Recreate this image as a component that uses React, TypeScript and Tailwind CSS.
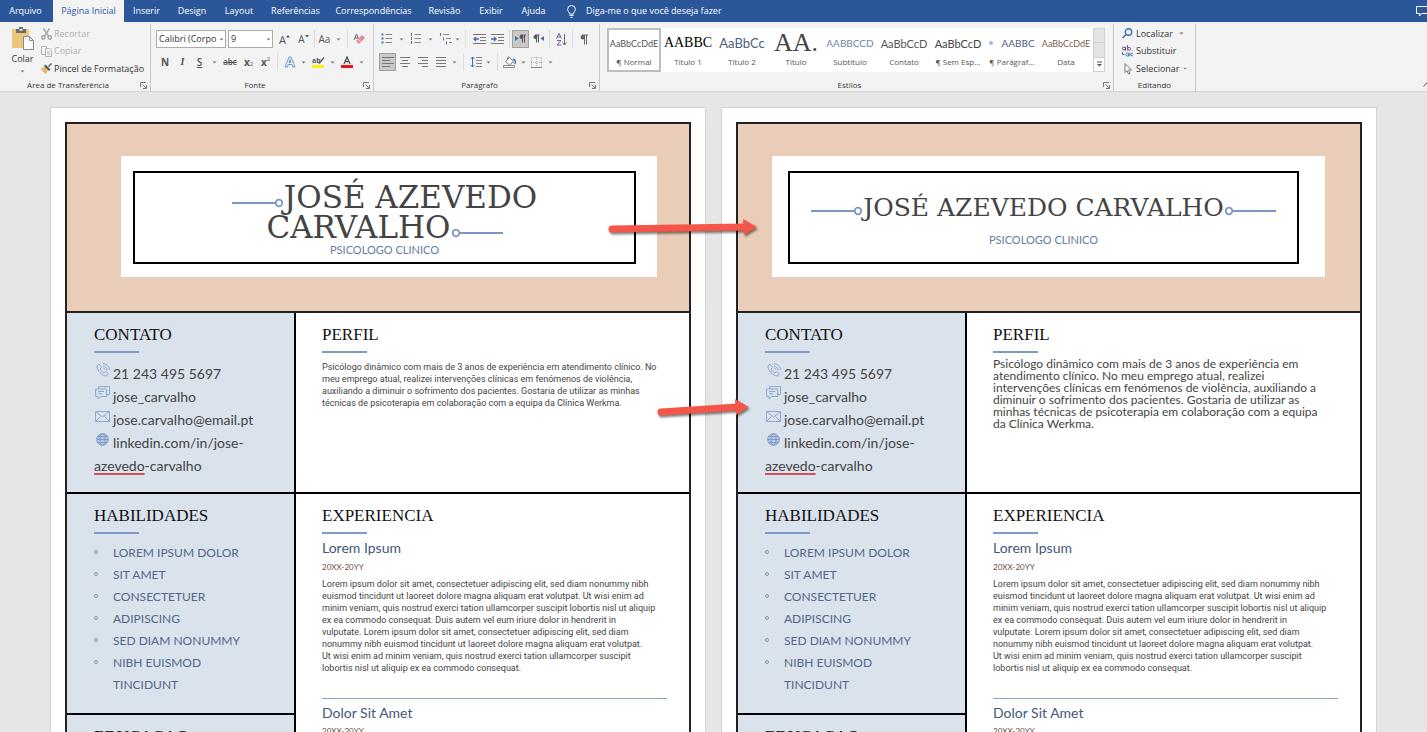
import type { ReactNode } from "react";

const tabs = [
  { label: "Inserir", width: "w-[45px]" },
  { label: "Design", width: "w-[46px]" },
  { label: "Layout", width: "w-[48px]" },
  { label: "Referências", width: "w-[65px]" },
  { label: "Correspondências", width: "w-[91px]" },
  { label: "Revisão", width: "w-[51px]" },
  { label: "Exibir", width: "w-[42px]" },
  { label: "Ajuda", width: "w-[43px]" },
];

const styles = [
  { name: "¶ Normal", sample: "AaBbCcDdE", look: "text-[9px] text-[#555]" },
  { name: "Título 1", sample: "AABBC", look: "font-['Liberation_Serif',serif] text-[14px] text-black" },
  { name: "Título 2", sample: "AaBbCc", look: "text-[13px] text-[#4b6080]" },
  { name: "Título", sample: "AA.", look: "font-['Liberation_Serif',serif] text-[26px] text-[#444]" },
  { name: "Subtítulo", sample: "AABBCCD", look: "text-[10px] text-[#6e86ab]" },
  { name: "Contato", sample: "AaBbCcD", look: "text-[11px] text-[#555]" },
  { name: "¶ Sem Esp...", sample: "AaBbCcD", look: "text-[11px] text-[#444]" },
  { name: "¶ Parágraf...", sample: "AABBC", look: "text-[10px] text-[#4b6080]", bullet: true },
  { name: "Data", sample: "AaBbCcDdE", look: "text-[9px] text-[#7c5f50]" },
];

const skills = [
  "LOREM IPSUM DOLOR",
  "SIT AMET",
  "CONSECTETUER",
  "ADIPISCING",
  "SED DIAM NONUMMY",
  "NIBH EUISMOD TINCIDUNT",
];

const experience = [
  "Lorem ipsum dolor sit amet, consectetuer adipiscing elit, sed diam nonummy nibh",
  "euismod tincidunt ut laoreet dolore magna aliquam erat volutpat. Ut wisi enim ad",
  "minim veniam, quis nostrud exerci tation ullamcorper suscipit lobortis nisl ut aliquip",
  "ex ea commodo consequat. Duis autem vel eum iriure dolor in hendrerit in",
  "vulputate. Lorem ipsum dolor sit amet, consectetuer adipiscing elit, sed diam",
  "nonummy nibh euismod tincidunt ut laoreet dolore magna aliquam erat volutpat.",
  "Ut wisi enim ad minim veniam, quis nostrud exerci tation ullamcorper suscipit",
  "lobortis nisl ut aliquip ex ea commodo consequat.",
];

const profileSmall = [
  "Psicólogo dinâmico com mais de 3 anos de experiência em atendimento clínico. No",
  "meu emprego atual, realizei intervenções clínicas em fenómenos de violência,",
  "auxiliando a diminuir o sofrimento dos pacientes. Gostaria de utilizar as minhas",
  "técnicas de psicoterapia em colaboração com a equipa da Clínica Werkma.",
];

const profileLarge = [
  "Psicólogo dinâmico com mais de 3 anos de experiência em",
  "atendimento clínico. No meu emprego atual, realizei",
  "intervenções clínicas em fenómenos de violência, auxiliando a",
  "diminuir o sofrimento dos pacientes. Gostaria de utilizar as",
  "minhas técnicas de psicoterapia em colaboração com a equipa",
  "da Clínica Werkma.",
];

function Caret({ width = "w-3" }: { width?: string }) {
  return (
    <button aria-label="Mais opções" className={`${width} flex h-full shrink-0 items-center justify-center`}>
      <svg width="5" height="3" viewBox="0 0 5 3">
        <path d="M0.5 0.5h4L2.5 2.6z" fill="#777" />
      </svg>
    </button>
  );
}

function Tool({
  label,
  width = "w-[18px]",
  active = false,
  children,
}: {
  label: string;
  width?: string;
  active?: boolean;
  children: ReactNode;
}) {
  return (
    <button
      aria-label={label}
      className={`${width} flex h-full shrink-0 items-center justify-center text-[10px] leading-none text-[#555] ${
        active ? "border border-[#a0a0a0] bg-[#c8c8c8]" : ""
      }`}
    >
      {children}
    </button>
  );
}

function Divider({ width = "w-[7px]" }: { width?: string }) {
  return (
    <span className={`${width} flex h-full shrink-0 justify-center`}>
      <span className="h-full w-px bg-[#dedede]" />
    </span>
  );
}

function Group({
  title,
  width,
  launcher = true,
  children,
}: {
  title: string;
  width: string;
  launcher?: boolean;
  children: ReactNode;
}) {
  return (
    <section className={`${width} flex shrink-0 flex-col pt-0.5`}>
      <div className="flex h-full flex-col border-r border-[#c9c9c9]">
        <div className="h-[55px] shrink-0 px-[5px]">{children}</div>
        <div className="flex h-3 shrink-0 items-center">
          <h2 className="flex-1 text-center text-[8px] leading-3">{title}</h2>
          {launcher && (
            <button aria-label={`Opções de ${title}`} className="mr-[3px] ml-1 w-[7px]">
              <svg width="7" height="7" viewBox="0 0 7 7" fill="none" stroke="#777">
                <path d="M0.5 5V0.5H6M2.5 2.5l3.5 3.5M6.5 3v3.5H3" />
              </svg>
            </button>
          )}
        </div>
      </div>
    </section>
  );
}

// Four horizontal strokes, each given as [start, end]
function Lines({ rows }: { rows: number[][] }) {
  return (
    <svg width="12" height="11" viewBox="0 0 12 11" stroke="#777">
      {rows.map(([from, to], i) => (
        <path key={i} d={`M${from} ${i * 3 + 0.5}H${to}`} />
      ))}
    </svg>
  );
}

function Clipboard() {
  return (
    <Group title="Área de Transferência" width="w-[151px]">
      <div className="flex pt-px">
        <button className="mr-px flex w-[35px] flex-col items-center">
          <svg width="24" height="24" viewBox="0 0 24 24" className="mt-px shrink-0">
            <rect x="1" y="3" width="17" height="19" fill="#ecc57c" />
            <path d="M5 3h3V1h4v2h3v4H5z" fill="#6c6c6c" />
            <rect x="8.500" y="3" width="3" height="1.500" fill="#fff" />
            <path d="M12.500 10.500h6l4 4v9h-10z" fill="#fff" stroke="#888" />
            <path d="M18.500 10.500v4h4" fill="none" stroke="#888" />
          </svg>
          <span className="mt-0.5 leading-[14px]">Colar</span>
          <svg width="5" height="3" viewBox="0 0 5 3" className="mt-1">
            <path d="M0.500 0.500h4L2.500 2.600z" fill="#777" />
          </svg>
        </button>
        <div className="flex flex-col">
          <button disabled className="flex h-[17px] items-center gap-0.5 text-[#b0b0b0]">
            <svg width="11" height="12" viewBox="0 0 11 12" fill="none" stroke="#a8a8a8" strokeWidth="1.400">
              <path d="M2.500 0.500l5 7.500M8.500 0.500l-5 7.500" />
              <circle cx="2.300" cy="9.500" r="1.700" />
              <circle cx="8.700" cy="9.500" r="1.700" />
            </svg>
            Recortar
          </button>
          <button disabled className="flex h-[18px] items-center gap-0.5 text-[#b0b0b0]">
            <svg width="11" height="11" viewBox="0 0 11 11" fill="#f3f3f3" stroke="#b5b5b5">
              <path d="M0.500 0.500h5v8h-5z" />
              <path d="M4.500 2.500h4l2 2v6h-6zM6 6h3M6 8h3" />
            </svg>
            Copiar
          </button>
          <button className="flex h-[17px] items-center gap-0.5 whitespace-nowrap">
            <svg width="11" height="11" viewBox="0 0 11 11">
              <path d="M0 5l4-1 3 3-2 4c-2-1-4-3-5-6z" fill="#e9b568" />
              <path d="M3 3l1.500-1.500 5 5L8 8zM7 3l3-3 1 1-3 3z" fill="#555" />
            </svg>
            Pincel de Formatação
          </button>
        </div>
      </div>
    </Group>
  );
}

function FontGroup() {
  return (
    <Group title="Fonte" width="w-[223px]">
      <div className="flex flex-col gap-[5px] pt-1.5">
        <div className="flex h-[18px]">
          <div className="relative mr-0.5 h-full w-[70px]">
            <select
              aria-label="Fonte"
              className="h-full w-full appearance-none border border-[#ababab] bg-white pl-0.5 text-[9px]"
            >
              <option>Calibri (Corpo</option>
            </select>
            <span className="pointer-events-none absolute inset-y-0 right-0">
              <Caret width="w-2.5" />
            </span>
          </div>
          <div className="relative h-full w-[45px]">
            <select
              aria-label="Tamanho da fonte"
              className="h-full w-full appearance-none border border-[#ababab] bg-white pl-0.5 text-[9px]"
            >
              <option>9</option>
            </select>
            <span className="pointer-events-none absolute inset-y-0 right-0">
              <Caret width="w-2.5" />
            </span>
          </div>
          <Tool label="Aumentar fonte" width="w-[23px]">
            <span className="text-[11px]">A</span>
            <svg width="4" height="8" viewBox="0 0 4 8" fill="#555">
              <path d="M0 2.500L2 0l2 2.500z" />
            </svg>
          </Tool>
          <Tool label="Diminuir fonte" width="w-[15px]">
            A
            <svg width="4" height="8" viewBox="0 0 4 8" fill="#555">
              <path d="M0 0l2 2.500L4 0z" />
            </svg>
          </Tool>
          <Divider width="w-[6px]" />
          <Tool label="Maiúsculas e minúsculas" width="w-[15px]">
            Aa
          </Tool>
          <Caret />
          <Divider width="w-[6px]" />
          <Tool label="Limpar formatação">
            <svg width="12" height="12" viewBox="0 0 12 12">
              <path d="M1 7l2.500-6L6 7M2 5h3" fill="none" stroke="#666" />
              <path d="M3 8l6-6 3 3-6 6z" fill="#e58a9c" />
              <path d="M5 6l3 3" stroke="#fff" strokeWidth="0.700" />
            </svg>
          </Tool>
        </div>
        <div className="flex h-[18px]">
          <Tool label="Negrito"><b>N</b></Tool>
          <Tool label="Itálico" width="w-[17px]">
            <i className="font-['Liberation_Serif',serif] font-bold">I</i>
          </Tool>
          <Tool label="Sublinhado" width="w-[17px]"><u className="font-semibold">S</u></Tool>
          <Caret />
          <Tool label="Tachado" width="w-5"><s className="text-[8px] font-semibold">abc</s></Tool>
          <Tool label="Subscrito" width="w-[17px]"><b>x</b><sub className="text-[6px]">2</sub></Tool>
          <Tool label="Sobrescrito" width="w-[17px]"><b>x</b><sup className="text-[6px]">2</sup></Tool>
          <Divider />
          <Tool label="Efeitos de texto" width="w-[17px]">
            <svg width="12" height="12" viewBox="0 0 12 12" fill="none" stroke="#6d9ad2">
              <path d="M1 11L5 1h2l4 10H8.500L8 8.500H4L3.500 11zM5 6.500h2L6 3.500z" />
            </svg>
          </Tool>
          <Caret width="w-2.5" />
          <Tool label="Cor do realce" width="w-5">
            <svg width="13" height="13" viewBox="0 0 13 13">
              <text x="0" y="7" fontSize="7" fontWeight="700" fill="#555">ab</text>
              <path d="M7 7.500l5-6" stroke="#666" strokeWidth="1.500" />
              <rect y="9" width="12" height="3" fill="#fff200" />
            </svg>
          </Tool>
          <Caret width="w-[9px]" />
          <Tool label="Cor da fonte" width="w-5">
            <svg width="12" height="13" viewBox="0 0 12 13">
              <path d="M3 8l3-7 3 7M4 5.500h4" fill="none" stroke="#555" strokeWidth="1.300" />
              <rect y="9" width="12" height="3" fill="#e8141c" />
            </svg>
          </Tool>
          <Caret width="w-2" />
        </div>
      </div>
    </Group>
  );
}

function ListIcon({ numbered = false }: { numbered?: boolean }) {
  return (
    <svg width="12" height="12" viewBox="0 0 12 12">
      {[1.5, 5.5, 9.5].map((y) => (
        <g key={y}>
          {numbered ? (
            <path d={`M1.500 ${y - 1.5}v3`} stroke="#4675b5" />
          ) : (
            <rect x="0.500" y={y - 1} width="2" height="2" fill="#4675b5" />
          )}
          <path d={`M4.500 ${y}H11`} stroke="#888" />
        </g>
      ))}
    </svg>
  );
}

function IndentIcon({ flip = false }: { flip?: boolean }) {
  return (
    <svg width="13" height="11" viewBox="0 0 13 11" fill="none">
      <path d="M0 .5h13M7 3.500h6M7 6.500h6M0 9.500h13" stroke="#777" />
      <path d={flip ? "M0 5h5M3 3l2 2-2 2" : "M1 5h5M3 3L1 5l2 2"} stroke="#3c6eb4" strokeWidth="1.300" />
    </svg>
  );
}

function ParagraphGroup() {
  return (
    <Group title="Parágrafo" width="w-[226px]">
      <div className="flex flex-col gap-[5px] pt-1.5">
        <div className="flex h-[18px]">
          <Tool label="Marcadores" width="w-4"><ListIcon /></Tool>
          <Caret width="w-[13px]" />
          <Tool label="Numeração" width="w-4"><ListIcon numbered /></Tool>
          <Caret width="w-[13px]" />
          <Tool label="Lista de vários níveis" width="w-4">
            <svg width="13" height="12" viewBox="0 0 13 12">
              <path d="M1.500 0v3M4.500 4.500v3M7.500 8.500v3" stroke="#4675b5" />
              <path d="M4 1.500h6M7 5.500h5M10 9.500h3" stroke="#888" />
            </svg>
          </Tool>
          <Caret width="w-2" />
          <Divider width="w-[9px]" />
          <Tool label="Diminuir recuo"><IndentIcon /></Tool>
          <Tool label="Aumentar recuo"><IndentIcon flip /></Tool>
          <Divider width="w-[6px]" />
          <Tool label="Da esquerda para a direita" width="w-[17px]" active>
            <svg width="11" height="10" viewBox="0 0 11 10">
              <path d="M0 2l3.500 2.500L0 7z" fill="#3c6eb4" />
              <path d="M7.500 1v7.500M9.500 1v7.500M5.500 1H11" stroke="#555" fill="none" />
              <circle cx="6.500" cy="3" r="2" fill="#555" />
            </svg>
          </Tool>
          <Tool label="Da direita para a esquerda">
            <svg width="11" height="10" viewBox="0 0 11 10">
              <path d="M11 2L7.500 4.500 11 7z" fill="#3c6eb4" />
              <path d="M3.500 1v7.500M5.500 1v7.500M2 1h4.500" stroke="#555" fill="none" />
              <circle cx="2.500" cy="3" r="2" fill="#555" />
            </svg>
          </Tool>
          <Divider width="w-[5px]" />
          <Tool label="Classificar">
            <svg width="11" height="13" viewBox="0 0 11 13" fill="none">
              <path d="M0.500 5.500L3 .5l2.500 5M1.500 4h3" stroke="#3c6eb4" />
              <path d="M1 7.500h4l-4 4.500h4.500" stroke="#8854a8" />
              <path d="M8.500 1v11M6.500 9.500l2 2.500 2-2.500" stroke="#666" />
            </svg>
          </Tool>
          <Divider width="w-[5px]" />
          <Tool label="Mostrar tudo">
            <svg width="8" height="11" viewBox="0 0 8 11">
              <path d="M4.500 1v9.500M6.500 1v9.500M2 1h6" stroke="#666" fill="none" />
              <circle cx="2.800" cy="3.200" r="2.200" fill="#666" />
            </svg>
          </Tool>
        </div>
        <div className="flex h-[18px]">
          <Tool label="Alinhar à esquerda" width="w-[17px]" active>
            <Lines rows={[[0, 12], [0, 8], [0, 12], [0, 8]]} />
          </Tool>
          <Tool label="Centralizar">
            <Lines rows={[[1, 11], [3, 9], [1, 11], [3, 9]]} />
          </Tool>
          <Tool label="Alinhar à direita">
            <Lines rows={[[1, 11], [5, 11], [1, 11], [5, 11]]} />
          </Tool>
          <Tool label="Justificar">
            <Lines rows={[[1, 11], [1, 11], [1, 11], [1, 11]]} />
          </Tool>
          <Caret width="w-[9px]" />
          <Divider width="w-[9px]" />
          <Tool label="Espaçamento entre linhas" width="w-4">
            <svg width="12" height="12" viewBox="0 0 12 12" fill="none">
              <path d="M2.500 1v10M.5 3l2-2 2 2M.5 9l2 2 2-2" stroke="#3c6eb4" />
              <path d="M6 1.500h6M6 4.500h6M6 7.500h6M6 10.500h6" stroke="#888" />
            </svg>
          </Tool>
          <Caret width="w-[9px]" />
          <Divider width="w-2" />
          <Tool label="Sombreamento">
            <svg width="14" height="12" viewBox="0 0 14 12" fill="none">
              <path d="M2.500 5.500l4-4 4 4-4 3.500z" fill="#fff" stroke="#777" />
              <path d="M4.500 4V1.500q1-1.500 2 0" stroke="#777" />
              <path d="M10 3q3 1 2 5" stroke="#3c6eb4" strokeWidth="1.500" />
              <path d="M.5 9.500h11v2H.5z" fill="#fff" stroke="#888" />
            </svg>
          </Tool>
          <Caret width="w-2" />
          <Tool label="Bordas">
            <svg width="11" height="11" viewBox="0 0 11 11" fill="none" stroke="#aaa">
              <path d="M.5.5h10v10H.5zM5.500 0v11M0 5.500h11" strokeDasharray="1 1" />
              <path d="M0 10.500h11" stroke="#888" />
            </svg>
          </Tool>
          <Caret width="w-2.5" />
        </div>
      </div>
    </Group>
  );
}

function StylesGroup() {
  return (
    <Group title="Estilos" width="w-[514px]">
      <div className="pt-1">
        <div className="ml-0.5 flex h-11 w-[498px] bg-white">
          {styles.map((style, i) => (
            <button
              key={style.name}
              className={`flex w-[54px] shrink-0 flex-col items-center border-2 whitespace-nowrap text-[#555] ${
                i === 0 ? "border-[#bdbdbd]" : "border-transparent"
              }`}
            >
              <span className={`flex h-[26px] items-center leading-none font-['Lato',sans-serif] ${style.look}`}>
                {style.bullet && <span className="mr-2 size-1 shrink-0 rounded-full bg-[#a9bbd6]" />}
                {style.sample}
              </span>
              <span className="text-[8px] leading-3">{style.name}</span>
            </button>
          ))}
          <div className="flex w-3 flex-col border border-[#cfcfcf]">
            <button aria-label="Linha anterior" className="flex-1 bg-[#e3e3e3]" />
            <button aria-label="Próxima linha" className="flex-1 border-y border-[#cfcfcf] bg-[#e3e3e3]" />
            <button aria-label="Mais estilos" className="flex flex-1 items-center justify-center">
              <svg width="5" height="6" viewBox="0 0 5 6">
                <path d="M0 1h5" stroke="#555" />
                <path d="M0 3h5L2.500 5.500z" fill="#555" />
              </svg>
            </button>
          </div>
        </div>
      </div>
    </Group>
  );
}

function EditGroup() {
  return (
    <Group title="Editando" width="w-[82px]" launcher={false}>
      <div className="flex flex-col pt-px pl-[3px]">
        <button className="flex h-[17px] items-center gap-[3px]">
          <svg width="11" height="11" viewBox="0 0 11 11" fill="none" stroke="#3c6eb4" strokeWidth="1.400">
            <circle cx="6.500" cy="4" r="3.200" />
            <path d="M4 6.500L.5 10" />
          </svg>
          Localizar
          <Caret />
        </button>
        <button className="flex h-[18px] items-center gap-[3px]">
          <svg width="11" height="12" viewBox="0 0 11 12" fill="none">
            <circle cx="2" cy="3.500" r="1.500" stroke="#555" />
            <path d="M3.500 2v3.500" stroke="#555" />
            <path d="M5.500 0v5.500" stroke="#8854a8" />
            <circle cx="7.200" cy="3.800" r="1.500" stroke="#8854a8" />
            <circle cx="5.500" cy="9.500" r="1.500" stroke="#3c6eb4" />
            <path d="M7 8v3.500M10.800 8.300q-2.500-.5-2.500 1.200t2.500 1.300M.5 7v2.500h2" stroke="#3c6eb4" />
          </svg>
          Substituir
        </button>
        <button className="flex h-[17px] items-center gap-[3px]">
          <svg width="11" height="12" viewBox="0 0 11 12">
            <path d="M3 .5v9l2-2 1.500 3.500 1.500-.7L6.500 7H9.500z" fill="#fff" stroke="#777" />
          </svg>
          Selecionar
          <Caret width="w-1" />
        </button>
      </div>
    </Group>
  );
}

function Ribbon() {
  return (
    <header className="shrink-0 text-[9px] text-[#333]">
      <nav className="flex h-[22px] items-center bg-[#2b579a] text-white">
        <button className="w-[53px] pr-0.5 text-center">Arquivo</button>
        <button className="h-full w-[71px] bg-[#f3f3f3] text-center text-[#2b579a]">Página Inicial</button>
        {tabs.map((tab) => (
          <button key={tab.label} className={`${tab.width} whitespace-nowrap text-center`}>
            {tab.label}
          </button>
        ))}
        <button className="ml-3 flex items-center gap-2.5 whitespace-nowrap">
          <svg width="9" height="13" viewBox="0 0 9 13" fill="none" stroke="#fff">
            <path d="M2.500 9C2.500 7 .6 6.500 .6 4.200a3.900 3.700 0 0 1 7.800 0C8.400 6.500 6.500 7 6.500 9zM2.500 10.500h4M3.500 12.400h2" />
          </svg>
          Diga-me o que você deseja fazer
        </button>
        <button aria-label="Comentários" className="ml-auto h-3 w-[11px] overflow-hidden">
          <svg width="15" height="12" viewBox="0 0 15 12" fill="none" stroke="#fff">
            <path d="M.5 1.500h14v7H5.500L3.500 11V8.500h-3z" />
          </svg>
        </button>
      </nav>
      <div className="flex h-[70px] border-b border-[#d5d5d5] bg-[#f3f3f3]">
        <Clipboard />
        <FontGroup />
        <ParagraphGroup />
        <StylesGroup />
        <EditGroup />
        <button aria-label="Recolher a faixa de opções" className="mt-auto mb-1 ml-auto w-1 overflow-hidden">
          <svg width="8" height="5" viewBox="0 0 8 5" fill="none" stroke="#555">
            <path d="M.5 4.500l3.500-4 3.500 4" />
          </svg>
        </button>
      </div>
    </header>
  );
}

function Heading({ children }: { children: ReactNode }) {
  return (
    <>
      <h2 className="font-['Liberation_Serif',serif] text-[17px] leading-6 text-[#111]">{children}</h2>
      <div className="mt-1 h-0.5 w-[45px] bg-[#7f9ac6]" />
    </>
  );
}

function Stem({ flip = false }: { flip?: boolean }) {
  return (
    <svg width="52" height="10" viewBox="0 0 52 10" fill="none" stroke="#7d97c2" className="inline-block align-baseline">
      <path d={flip ? "M8 5h44" : "M0 5h44"} strokeWidth="2" />
      <circle cx={flip ? 5 : 47} cy="5" r="3.300" strokeWidth="1.800" />
    </svg>
  );
}

function TextLines({ lines }: { lines: string[] }) {
  return (
    <>
      {lines.map((line) => (
        <span key={line} className="block whitespace-nowrap">
          {line}
        </span>
      ))}
    </>
  );
}

const contactIcons = {
  phone: (
    <svg width="14" height="14" viewBox="0 0 14 14" fill="none" stroke="#8fa8cd">
      <path d="M3 1L1 3c-.5 4 5 10 9.500 10l2-2.500-3-2-1.500 1.500C6.500 9.500 4.500 7.500 4 6l1.500-1.500zM7 3c2 0 4 2 4 4M7 .7c3.500 0 6.300 2.800 6.300 6.300M7.500 5.200c.8 0 1.300.6 1.300 1.300" />
    </svg>
  ),
  chat: (
    <svg width="15" height="14" viewBox="0 0 15 14" fill="none" stroke="#8fa8cd">
      <path d="M3.500 3V.6h11v8h-2.500M.6 3h11v7.500H5.500L3 13v-2.500H.6zM3 5.500h6M3 7.800h4" />
    </svg>
  ),
  mail: (
    <svg width="15" height="11" viewBox="0 0 15 11" fill="none" stroke="#8fa8cd">
      <path d="M.5.5h14v10H.5zM.5.5l7 5.500 7-5.500M.5 10.500l5-5M14.500 10.500l-5-5" />
    </svg>
  ),
  web: (
    <svg width="13" height="13" viewBox="0 0 13 13" fill="#b7c8e2" stroke="#7f9bc6">
      <circle cx="6.500" cy="6.500" r="5.800" />
      <ellipse cx="6.500" cy="6.500" rx="2.600" ry="5.800" fill="none" />
      <path d="M.7 6.500h11.600M1.500 3.500h10M1.500 9.500h10" />
    </svg>
  ),
};

function ContactLine({ icon, children }: { icon: keyof typeof contactIcons; children: ReactNode }) {
  return (
    <li className="flex h-[23px] whitespace-nowrap">
      <span className="flex h-4 w-[19px] shrink-0 items-center justify-center pr-0.5">{contactIcons[icon]}</span>
      {children}
    </li>
  );
}

function Resume({ fixed = false }: { fixed?: boolean }) {
  return (
    <article className="flex-1 border border-[#d3d3d3] bg-white px-[14px] pt-[14px] pb-4">
      <div className="border-2 border-[#222]">
        <header className={`bg-[#e9cdb8] pt-8 pb-[34px] ${fixed ? "pr-[35px] pl-[34px]" : "pr-8 pl-[54px]"}`}>
          <div className={`bg-white pt-[15px] pb-[13px] ${fixed ? "pr-[26px] pl-4" : "pr-[21px] pl-3"}`}>
            <div
              className={`flex h-[93px] flex-col items-center justify-center border-2 border-black text-center ${
                fixed ? "" : "pt-1"
              }`}
            >
              <h1
                className={`whitespace-nowrap font-['DejaVu_Serif',serif] text-[#444] ${
                  fixed ? "text-[25px] leading-[44px]" : "text-[31px] leading-[30px]"
                }`}
              >
                <Stem />
                {fixed ? (
                  "JOSÉ AZEVEDO CARVALHO"
                ) : (
                  <>
                    JOSÉ AZEVEDO
                    <br />
                    CARVALHO
                  </>
                )}
                <Stem flip />
              </h1>
              <p className={`text-[11px] text-[#667da4] ${fixed ? "leading-5" : "leading-4"}`}>PSICOLOGO CLINICO</p>
            </div>
          </div>
        </header>

        <div className="grid grid-cols-[229px_1fr] border-t-2 border-[#222]">
          <section className="h-[179px] border-r-2 border-black bg-[#dae2ec] pt-2.5 pl-[27px]">
            <Heading>CONTATO</Heading>
            <ul className="mt-[9px] text-[14px] leading-[23px] text-[#444]">
              <ContactLine icon="phone">21 243 495 5697</ContactLine>
              <ContactLine icon="chat">jose_carvalho</ContactLine>
              <ContactLine icon="mail">jose.carvalho@email.pt</ContactLine>
              <ContactLine icon="web">linkedin.com/in/jose-</ContactLine>
              <li>
                <span className="underline decoration-[#d8505c] decoration-2 underline-offset-2">azevedo</span>
                -carvalho
              </li>
            </ul>
          </section>
          <section className="pt-2.5 pl-[26px]">
            <Heading>PERFIL</Heading>
            <p
              className={
                fixed
                  ? "mt-[5px] text-[12px] leading-3 text-[#444]"
                  : "mt-2 font-['Roboto',sans-serif] text-[9px] leading-3 text-[#444]"
              }
            >
              <TextLines lines={fixed ? profileLarge : profileSmall} />
            </p>
          </section>
        </div>

        <div className="grid grid-cols-[229px_1fr] border-t-2 border-black">
          <div className="flex flex-col border-r-2 border-black bg-[#dae2ec]">
            <section className="h-[219px] pt-2.5 pl-[27px]">
              <Heading>HABILIDADES</Heading>
              <ul className="mt-2 text-[12px] leading-[22px] text-[#54678a]">
                {skills.map((skill) => (
                  <li key={skill} className="flex">
                    <span className="mt-2 mr-[15px] size-1 shrink-0 rounded-full border border-[#8196b8]" />
                    <span className="w-[145px]">{skill}</span>
                  </li>
                ))}
              </ul>
            </section>
            <section className="border-t-2 border-black pt-2.5 pl-[27px]">
              <Heading>EDUCACAO</Heading>
            </section>
          </div>
          <section className="pt-2.5 pr-[22px] pl-[26px]">
            <Heading>EXPERIENCIA</Heading>
            <h3 className="mt-1 text-[14px] leading-5 text-[#42587c]">Lorem Ipsum</h3>
            <p className="mt-px text-[8px] leading-4 text-[#6b4a3c]">20XX-20YY</p>
            <p className="mt-[3px] font-['Roboto',sans-serif] text-[9px] leading-3 text-[#444]">
              <TextLines lines={experience} />
            </p>
            <hr className="mt-6 border-[#89a5c8]" />
            <h3 className="mt-1 text-[14px] leading-5 text-[#42587c]">Dolor Sit Amet</h3>
            <p className="text-[8px] leading-4 text-[#6b4a3c]">20XX-20YY</p>
          </section>
        </div>
      </div>
    </article>
  );
}

function Arrow({ width, rise }: { width: number; rise: number }) {
  const mid = 12;
  const tail = mid + rise;
  return (
    <svg
      width={width}
      height="26"
      viewBox={`0 0 ${width} 26`}
      className="drop-shadow-[1px_2px_1px_rgba(0,0,0,0.5)]"
    >
      <path d={`M4 ${tail}L${width - 12} ${mid}`} stroke="#f4574a" strokeWidth="7" strokeLinecap="round" />
      <path d={`M${width - 15} 4L${width - 1} ${mid}L${width - 14} 20z`} fill="#f4574a" />
    </svg>
  );
}

export default function App() {
  return (
    <div className="flex h-screen flex-col overflow-hidden bg-[#e6e6e6] font-['Open_Sans',sans-serif]">
      <Ribbon />
      <main className="relative min-h-0 flex-1 overflow-hidden px-[50px] pt-[15px] font-['Lato',sans-serif] [font-variant-ligatures:none]">
        <div className="flex gap-[15px]">
          <Resume />
          <Resume fixed />
        </div>
        <div className="absolute top-[123px] left-[608px]">
          <Arrow width={150} rise={2} />
        </div>
        <div className="absolute top-[303px] left-[657px]">
          <Arrow width={93} rise={5} />
        </div>
      </main>
    </div>
  );
}
